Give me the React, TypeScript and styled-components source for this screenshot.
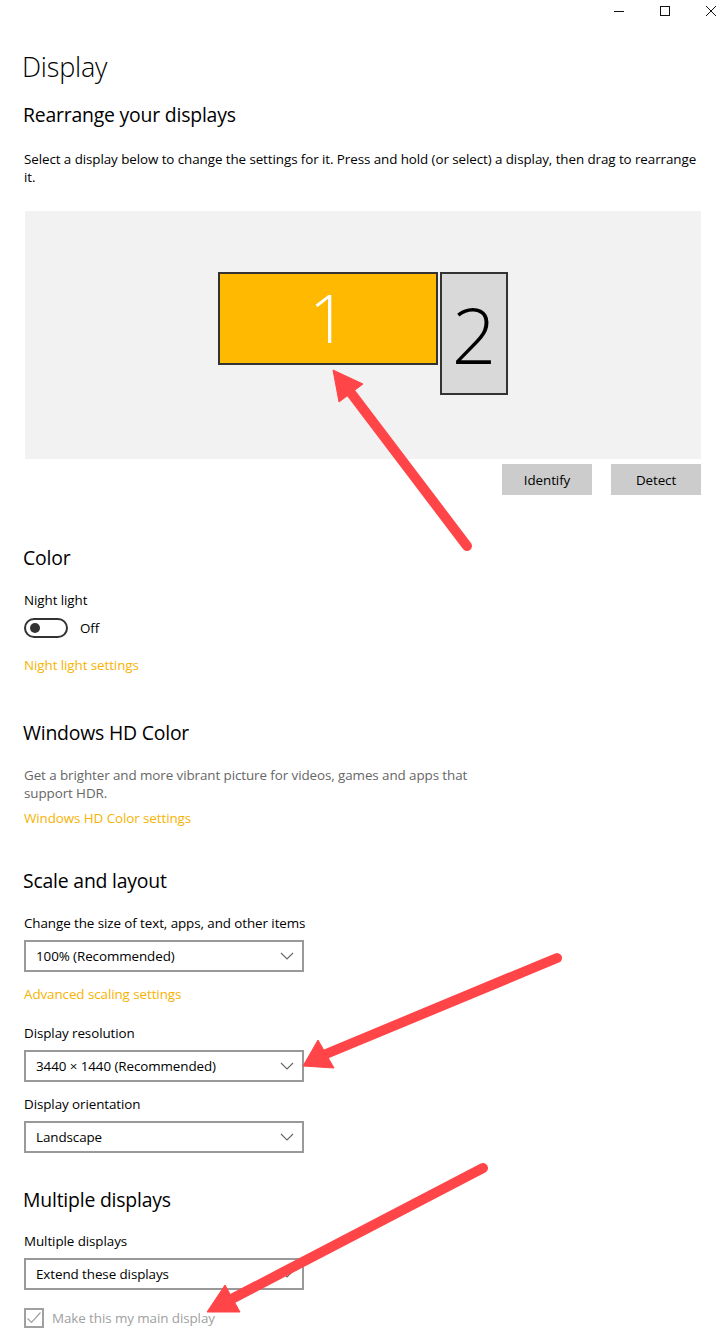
import styled, { createGlobalStyle } from 'styled-components';

const GlobalStyle = createGlobalStyle`
    html, body {
        margin: 0;
        padding: 0;
        background: #ffffff;
    }
    * {
        box-sizing: border-box;
    }
`;

const Page = styled.div`
    position: relative;
    width: 722px;
    height: 1336px;
    overflow: hidden;
    background: #ffffff;
    color: #000000;
    font-family: 'Open Sans', 'Noto Sans', sans-serif;
    letter-spacing: -0.08px;
`;

const TitleBar = styled.div`
    display: flex;
    justify-content: flex-end;
    height: 22px;
    margin-right: -12px;
`;

const WinButton = styled.div`
    width: 46px;
    height: 22px;
    display: flex;
    align-items: center;
    justify-content: center;
    color: #111;
`;

const Content = styled.div`
    padding: 0 21px 0 24px;
`;

const PageTitle = styled.h1`
    margin: 25px 0 0 -2px;
    font-size: 27px;
    font-weight: 300;
    line-height: 40px;
    letter-spacing: -0.2px;
`;

const SectionTitle = styled.h2<{ $top: number }>`
    margin: ${(p) => p.$top}px 0 0 -1px;
    font-size: 19.4px;
    font-weight: 400;
    line-height: 28px;
    letter-spacing: -0.2px;
`;

const Text = styled.p<{ $top: number; $muted?: boolean; $max?: number }>`
    margin: ${(p) => p.$top}px 0 0 0;
    font-size: 13.4px;
    line-height: 18px;
    color: ${(p) => (p.$muted ? '#666666' : '#000000')};
    max-width: ${(p) => (p.$max ? `${p.$max}px` : 'none')};
`;

const Link = styled.div<{ $top: number }>`
    margin-top: ${(p) => p.$top}px;
    font-size: 13.4px;
    line-height: 18px;
    color: #f7b300;
`;

const Arrangement = styled.div`
    margin: 25px 0 0 1px;
    height: 248px;
    background: #f2f2f2;
    display: flex;
    justify-content: center;
    align-items: flex-start;
    padding: 61px 0 0 0;
    gap: 2px;
`;

const Monitor = styled.div<{ $w: number; $h: number; $primary?: boolean }>`
    width: ${(p) => p.$w}px;
    height: ${(p) => p.$h}px;
    border: 2px solid #333333;
    background: ${(p) => (p.$primary ? '#ffb900' : '#d9d9d9')};
    color: ${(p) => (p.$primary ? '#ffffff' : '#000000')};
    display: flex;
    align-items: center;
    justify-content: center;
    padding-bottom: ${(p) => (p.$primary ? 4 : 0)}px;
    font-weight: 300;
    font-size: ${(p) => (p.$primary ? 66 : 78)}px;
    line-height: 1;
    letter-spacing: 0;
`;

const ButtonRow = styled.div`
    display: flex;
    justify-content: flex-end;
    gap: 19px;
    margin-top: 5px;
`;

const GrayButton = styled.div`
    width: 90px;
    height: 31px;
    background: #cccccc;
    display: flex;
    align-items: center;
    justify-content: center;
    font-size: 13.4px;
`;

const ToggleRow = styled.div`
    display: flex;
    align-items: center;
    gap: 12px;
    margin-top: 9px;
    font-size: 13.4px;
`;

const Toggle = styled.div`
    width: 44px;
    height: 20px;
    border: 2px solid #333333;
    border-radius: 10px;
    display: flex;
    align-items: center;
    padding-left: 4px;

    &::before {
        content: '';
        width: 10px;
        height: 10px;
        border-radius: 50%;
        background: #333333;
    }
`;

const Select = styled.div<{ $top: number }>`
    margin-top: ${(p) => p.$top}px;
    width: 280px;
    height: 32px;
    border: 2px solid #999999;
    display: flex;
    align-items: center;
    justify-content: space-between;
    padding: 0 8px 0 10px;
    font-size: 13.4px;
`;

const CheckRow = styled.div`
    display: flex;
    align-items: center;
    gap: 8px;
    margin-top: 18px;
    font-size: 13.4px;
    color: #a0a0a0;
`;

const CheckBox = styled.div`
    width: 20px;
    height: 20px;
    border: 2px solid #a0a0a0;
    display: flex;
    align-items: center;
    justify-content: center;
`;

const Annotations = styled.svg`
    position: absolute;
    left: 0;
    top: 0;
    pointer-events: none;
`;

const Chevron = () => (
    <svg width="14" height="8" viewBox="0 0 14 8" fill="none">
        <path d="M1 1L7 7L13 1" stroke="#666666" strokeWidth="1.1" />
    </svg>
);

function Dropdown({ top, value }: { top: number; value: string }) {
    return (
        <Select $top={top}>
            <span>{value}</span>
            <Chevron />
        </Select>
    );
}

const ARROWS = [
    { tail: [467, 546], tip: [333, 370], c1: [339, 402], c2: [363, 384] },
    { tail: [557, 958], tip: [303, 1066], c1: [318, 1040], c2: [334, 1068] },
    { tail: [483, 1168], tip: [207, 1312], c1: [225, 1285], c2: [240, 1312] },
];

export default function App() {
    return (
        <Page>
            <GlobalStyle />
            <TitleBar>
                <WinButton>
                    <svg width="12" height="12" viewBox="0 0 12 12">
                        <path d="M1 6.5H11" stroke="#111" strokeWidth="1" />
                    </svg>
                </WinButton>
                <WinButton>
                    <svg width="12" height="12" viewBox="0 0 12 12" fill="none">
                        <rect x="1.5" y="1.5" width="9" height="9" stroke="#111" strokeWidth="1" />
                    </svg>
                </WinButton>
                <WinButton>
                    <svg width="12" height="12" viewBox="0 0 12 12" fill="none">
                        <path d="M1 1L11 11M11 1L1 11" stroke="#111" strokeWidth="1" />
                    </svg>
                </WinButton>
            </TitleBar>

            <Content>
                <PageTitle>Display</PageTitle>
                <SectionTitle $top={14}>Rearrange your displays</SectionTitle>
                <Text $top={21}>
                    Select a display below to change the settings for it. Press and hold (or select) a display, then
                    drag to rearrange it.
                </Text>

                <Arrangement>
                    <Monitor $w={220} $h={93} $primary>
                        1
                    </Monitor>
                    <Monitor $w={68} $h={123}>
                        2
                    </Monitor>
                </Arrangement>
                <ButtonRow>
                    <GrayButton>Identify</GrayButton>
                    <GrayButton>Detect</GrayButton>
                </ButtonRow>

                <SectionTitle $top={49}>Color</SectionTitle>
                <Text $top={19}>Night light</Text>
                <ToggleRow>
                    <Toggle />
                    <span>Off</span>
                </ToggleRow>
                <Link $top={18}>Night light settings</Link>

                <SectionTitle $top={45}>Windows HD Color</SectionTitle>
                <Text $top={19} $muted $max={470}>
                    Get a brighter and more vibrant picture for videos, games and apps that support HDR.
                </Text>
                <Link $top={7}>Windows HD Color settings</Link>

                <SectionTitle $top={40}>Scale and layout</SectionTitle>
                <Text $top={19}>Change the size of text, apps, and other items</Text>
                <Dropdown top={8} value="100% (Recommended)" />
                <Link $top={13}>Advanced scaling settings</Link>
                <Text $top={21}>Display resolution</Text>
                <Dropdown top={8} value="3440 × 1440 (Recommended)" />
                <Text $top={13}>Display orientation</Text>
                <Dropdown top={8} value="Landscape" />

                <SectionTitle $top={33}>Multiple displays</SectionTitle>
                <Text $top={18}>Multiple displays</Text>
                <Dropdown top={8} value="Extend these displays" />
                <CheckRow>
                    <CheckBox>
                        <svg width="16" height="16" viewBox="0 0 16 16" fill="none">
                            <path d="M1.5 8.5L5.5 12.5L14.5 2.5" stroke="#a0a0a0" strokeWidth="1.2" />
                        </svg>
                    </CheckBox>
                    <span>Make this my main display</span>
                </CheckRow>
            </Content>

            {/* red annotation arrows painted over the screenshot */}
            <Annotations width="722" height="1336" viewBox="0 0 722 1336">
                {ARROWS.map((a, i) => {
                    const mx = (a.c1[0] + a.c2[0]) / 2;
                    const my = (a.c1[1] + a.c2[1]) / 2;
                    return (
                        <g key={i} fill="#ff4548" stroke="#ff4548">
                            <line
                                x1={a.tail[0]}
                                y1={a.tail[1]}
                                x2={mx}
                                y2={my}
                                strokeWidth="10"
                                strokeLinecap="round"
                            />
                            <polygon
                                points={`${a.tip[0]},${a.tip[1]} ${a.c1[0]},${a.c1[1]} ${a.c2[0]},${a.c2[1]}`}
                                strokeWidth="1"
                                strokeLinejoin="round"
                            />
                        </g>
                    );
                })}
            </Annotations>
        </Page>
    );
}
